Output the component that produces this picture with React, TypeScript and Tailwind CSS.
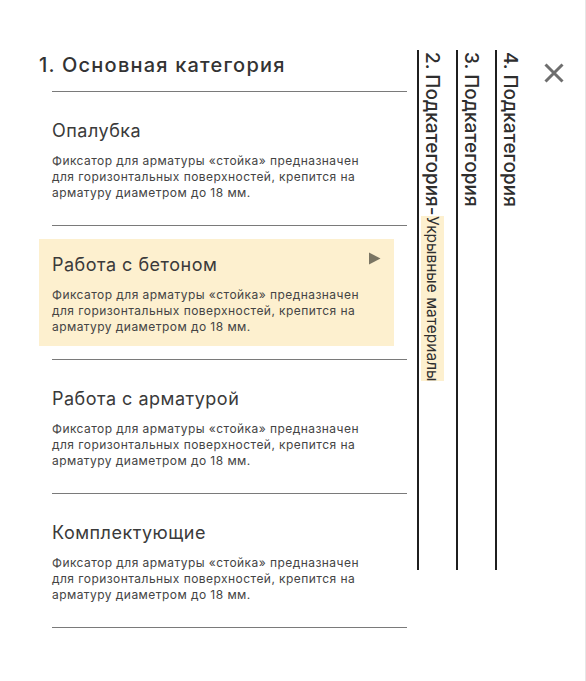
import React from "react";

const desc = [
  "Фиксатор для арматуры «стойка» предназначен",
  "для горизонтальных поверхностей, крепится на",
  "арматуру диаметром до 18 мм.",
];

const items = [
  { title: "Опалубка", active: false },
  { title: "Работа с бетоном", active: true },
  { title: "Работа с арматурой", active: false },
  { title: "Комплектующие", active: false },
];

const CategoryItem = ({ title, active }: { title: string; active: boolean }) => (
  <div className="py-[13px] border-b border-[#7a7a7a]">
    <div
      className={`relative -ml-[13px] w-[355px] px-[13px] pt-[14px] pb-[11px] ${
        active ? "bg-[#fdf0cf]" : ""
      }`}
    >
      <div className="text-[18px] leading-[24px] tracking-[0.5px] text-[#3a3a3a]">{title}</div>
      <p className="mt-[10px] text-[12px] leading-[16px] tracking-[0.45px] text-[#444]">
        {desc.map((line, i) => (
          <React.Fragment key={i}>
            {line}
            {i < desc.length - 1 && <br />}
          </React.Fragment>
        ))}
      </p>
      {active && (
        <svg
          className="absolute right-[13px] top-[13px]"
          width="13"
          height="13"
          viewBox="0 0 13 13"
        >
          <path d="M1 0.5 L12.5 6.5 L1 12.5 Z" fill="#7a7563" />
        </svg>
      )}
    </div>
  </div>
);

const VerticalColumn = ({ children }: { children: React.ReactNode }) => (
  <div className="w-[39px] h-[520px] border-l-2 border-[#1f1f1f]">
    <div className="[writing-mode:vertical-rl] pt-[2px] pl-[1px] text-[19px] leading-[24px] font-medium text-[#2e2e2e] whitespace-nowrap">
      {children}
    </div>
  </div>
);

export default function App() {
  return (
    <div className="w-[586px] h-[681px] bg-white border-r border-[#e6e6e6] flex pt-[50px] pl-[39px] font-['Inter',sans-serif]">
      {/* main category */}
      <div className="w-[368px]">
        <h2 className="mt-[1px] text-[20px] leading-[28px] font-medium tracking-[1.2px] text-[#333]">
          1. Основная категория
        </h2>
        <div className="ml-[13px] mt-[12px] w-[355px]">
          <div className="h-px bg-[#7a7a7a]" />
          {items.map((it) => (
            <CategoryItem key={it.title} title={it.title} active={it.active} />
          ))}
        </div>
      </div>

      {/* collapsed subcategory columns */}
      <div className="ml-[10px] flex">
        <VerticalColumn>
          2. Подкатегория-
          <span className="bg-[#fdf0cf] py-[2px] text-[15.5px] font-normal">
            Укрывные материалы
          </span>
        </VerticalColumn>
        <VerticalColumn>3. Подкатегория</VerticalColumn>
        <VerticalColumn>4. Подкатегория</VerticalColumn>
      </div>

      <button className="ml-[10px] mt-[13px] self-start" aria-label="Закрыть">
        <svg width="20" height="20" viewBox="0 0 20 20">
          <path d="M1.5 1.5 L18.5 18.5 M18.5 1.5 L1.5 18.5" stroke="#6e6e6e" strokeWidth="3" />
        </svg>
      </button>
    </div>
  );
}
